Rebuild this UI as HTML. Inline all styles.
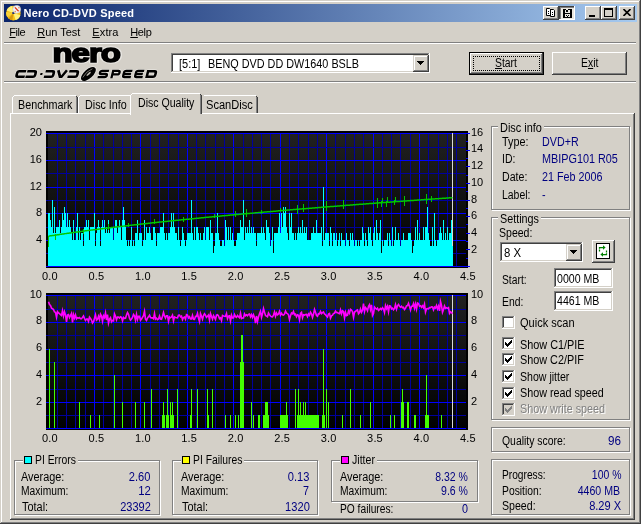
<!DOCTYPE html>
<html><head><meta charset="utf-8"><title>Nero CD-DVD Speed</title><style>
html,body{margin:0;padding:0;background:#d4d0c8;}
body{width:641px;height:524px;position:relative;overflow:hidden;font-family:"Liberation Sans",sans-serif;font-size:11px;line-height:13px;}
div,svg.abs,.abs{position:absolute;}
.t{position:absolute;white-space:pre;font-size:11px;line-height:13px;height:13px;}
.m{font-size:12.5px;line-height:15px;height:15px;}
u{text-decoration:underline;text-underline-offset:1px;}
.arrow{width:0;height:0;border-left:4px solid transparent;border-right:4px solid transparent;border-top:4px solid #000;}
</style></head><body><div id="win" style="left:0;top:0;width:641px;height:524px;will-change:transform;overflow:hidden">
<div class="abs" style="left:0;top:0;width:641px;height:524px;background:#d4d0c8"></div>
<div class="" style="left:0px;top:1px;width:640px;height:1px;background:#fff"></div>
<div class="" style="left:1px;top:1px;width:1px;height:522px;background:#fff"></div>
<div class="" style="left:639px;top:0px;width:1px;height:523px;background:#808080"></div>
<div class="" style="left:640px;top:0px;width:1px;height:524px;background:#404040"></div>
<div class="" style="left:0px;top:522px;width:640px;height:1px;background:#808080"></div>
<div class="" style="left:0px;top:523px;width:641px;height:1px;background:#404040"></div>
<div class="" style="left:0px;top:0px;width:640px;height:1px;background:#d4d0c8"></div>
<div class="" style="left:0px;top:0px;width:1px;height:523px;background:#d4d0c8"></div>
<div class="" style="left:4px;top:4px;width:633px;height:18px;background:linear-gradient(to right,#0a246a 0%,#a6caf0 100%)"></div>
<svg class="abs" style="left:6px;top:5px" width="16" height="16" viewBox="0 0 16 16">
<circle cx="7.4" cy="8.1" r="7.3" fill="#f5c118"/>
<path d="M7.4 8.1 L0.6 5.4 A7.3 7.3 0 0 1 6.2 0.9 Z" fill="#fff37c"/>
<path d="M7.4 8.1 L14.4 10.2 A7.3 7.3 0 0 1 9.6 15.1 Z" fill="#fff37c"/>
<path d="M7.4 8.1 L2.6 13.6 A7.3 7.3 0 0 0 6.4 15.3 Z" fill="#d8980e"/>
<path d="M7.4 8.1 L1.2 12 A7.3 7.3 0 0 1 0.2 7 Z" fill="#f9d23a"/>
<circle cx="7.4" cy="7.9" r="1.2" fill="#1a2a7a"/>
<circle cx="10.7" cy="4.3" r="3.9" fill="#f4f4f4"/>
<circle cx="10.7" cy="4.3" r="3.9" fill="none" stroke="#cfcfcf" stroke-width="0.7"/>
<path d="M8.9 2.4 L12.6 6.2" stroke="#e03818" stroke-width="1.3"/>
<circle cx="12.9" cy="2.7" r="0.7" fill="#e87850"/><circle cx="9.2" cy="6.5" r="0.7" fill="#e87850"/>
</svg>
<span id="t0" class="t" style="color:#fff;top:7px;left:23.5px;letter-spacing:0.225px;font-weight:bold;">Nero CD-DVD Speed</span>
<div class="" style="left:543px;top:6px;width:16px;height:14px;background:#d4d0c8;box-shadow:inset -1px -1px 0 #404040,inset 1px 1px 0 #ffffff,inset -2px -2px 0 #808080,inset 2px 2px 0 #d4d0c8;"><svg class="abs" style="left:3px;top:2px" width="10" height="10" viewBox="0 0 10 10"><path d="M0.5 0.5H3.5L4.5 1.5V7.5H0.5Z M4.5 1.5H7.5L8.5 2.5V8.5H4.5Z" fill="#fff" stroke="#000" stroke-width="1"/><rect x="2" y="3" width="1" height="1"/><rect x="2" y="5" width="1" height="1"/><rect x="6" y="4" width="1" height="1"/><rect x="6" y="6" width="1" height="1"/></svg></div>
<div class="" style="left:559px;top:6px;width:16px;height:14px;background:#ebe8e1;box-shadow:inset -1px -1px 0 #ffffff,inset 1px 1px 0 #404040,inset 2px 2px 0 #808080;"><svg class="abs" style="left:4px;top:3px" width="9" height="9" viewBox="0 0 9 9" shape-rendering="crispEdges"><rect x="0" y="0" width="9" height="9" fill="#000"/><rect x="2" y="1" width="5" height="3" fill="#ebe8e1"/><rect x="3" y="0" width="2" height="1" fill="#ebe8e1"/><rect x="3" y="1" width="2" height="2" fill="#000"/><rect x="2" y="5" width="5" height="3" fill="#ebe8e1"/><rect x="3" y="6" width="1" height="1" fill="#000"/><rect x="5" y="6" width="1" height="1" fill="#000"/><rect x="4" y="7" width="1" height="1" fill="#000"/></svg></div>
<div class="" style="left:585px;top:6px;width:16px;height:14px;background:#d4d0c8;box-shadow:inset -1px -1px 0 #404040,inset 1px 1px 0 #ffffff,inset -2px -2px 0 #808080,inset 2px 2px 0 #d4d0c8;"><div class="abs" style="left:4px;top:9px;width:6px;height:2px;background:#000"></div></div>
<div class="" style="left:601px;top:6px;width:16px;height:14px;background:#d4d0c8;box-shadow:inset -1px -1px 0 #404040,inset 1px 1px 0 #ffffff,inset -2px -2px 0 #808080,inset 2px 2px 0 #d4d0c8;"><div class="abs" style="left:3px;top:2px;width:9px;height:9px;box-sizing:border-box;border:1px solid #000;border-top:2px solid #000"></div></div>
<div class="" style="left:619px;top:6px;width:16px;height:14px;background:#d4d0c8;box-shadow:inset -1px -1px 0 #404040,inset 1px 1px 0 #ffffff,inset -2px -2px 0 #808080,inset 2px 2px 0 #d4d0c8;"><svg class="abs" style="left:4px;top:3px" width="8" height="7" viewBox="0 0 8 7"><path d="M0.5 0L7.5 7M7.5 0L0.5 7" stroke="#000" stroke-width="1.6"/></svg></div>
<span id="t1" class="t" style="color:#000;top:26px;left:9.3px;letter-spacing:-0.438px;"><u>F</u>ile</span>
<span id="t2" class="t" style="color:#000;top:26px;left:37.2px;"><u>R</u>un Test</span>
<span id="t3" class="t" style="color:#000;top:26px;left:92.3px;letter-spacing:0.123px;"><u>E</u>xtra</span>
<span id="t4" class="t" style="color:#000;top:26px;left:130.3px;letter-spacing:-0.385px;"><u>H</u>elp</span>
<div class="" style="left:4px;top:42px;width:632px;height:1px;background:#808080"></div>
<div class="" style="left:4px;top:43px;width:632px;height:1px;background:#fff"></div>
<div class="" style="left:4px;top:81px;width:632px;height:1px;background:#808080"></div>
<div class="" style="left:4px;top:82px;width:632px;height:1px;background:#fff"></div>
<svg class="abs" style="left:10px;top:44px" width="152" height="37" viewBox="10 44 152 37"><g font-family="Liberation Sans, sans-serif" font-weight="bold" font-size="25.4" transform="translate(52.5,62.1) scale(1.3,1)"><text x="0" y="0" stroke="#fff" stroke-width="3.6" stroke-linejoin="round" fill="#fff" opacity="0.5" letter-spacing="-0.8">nero</text><text x="0" y="0" stroke="#000" stroke-width="1.5" fill="#000" letter-spacing="-0.8">nero</text></g><g transform="translate(0,74) skewX(-14) translate(0,-74)"><path d="M25.4 71.25H18.599999999999998Q16.9 71.25 16.9 72.95V75.05Q16.9 76.75 18.599999999999998 76.75H25.4M26.6 71.25H33.699999999999996Q35.4 71.25 35.4 72.95V75.05Q35.4 76.75 33.699999999999996 76.75H26.200000000000003M45.0 71.25H51.8Q53.5 71.25 53.5 72.95V75.05Q53.5 76.75 51.8 76.75H44.6M57.4 70.25L60.7 76.75H62.300000000000004L66.0 70.25M68.6 71.25H75.8Q77.5 71.25 77.5 72.95V75.05Q77.5 76.75 75.8 76.75H68.19999999999999" fill="none" stroke="#fff" stroke-width="4.0" opacity="0.4" stroke-linejoin="round"/><path d="M108.2 70.95H101.3Q99.6 70.95 99.6 72.475Q99.6 74.0 101.3 74.0H105.5Q107.2 74.0 107.2 75.525Q107.2 77.05 105.5 77.05H98.39999999999999M112.4 78.14999999999999V70.95H117.5Q119.2 70.95 119.2 72.675Q119.2 74.4 117.5 74.4H112.4M131.6 70.95H125.3Q123.6 70.95 123.6 72.65V75.35Q123.6 77.05 125.3 77.05H131.6M123.6 74.0H131.0M143.4 70.95H137.29999999999998Q135.6 70.95 135.6 72.65V75.35Q135.6 77.05 137.29999999999998 77.05H143.4M135.6 74.0H142.8M147.4 71.25H153.8Q155.5 71.25 155.5 72.95V75.05Q155.5 76.75 153.8 76.75H147.4Z" fill="none" stroke="#fff" stroke-width="3.9" opacity="0.4" stroke-linejoin="round"/><path d="M25.4 71.25H18.599999999999998Q16.9 71.25 16.9 72.95V75.05Q16.9 76.75 18.599999999999998 76.75H25.4M26.6 71.25H33.699999999999996Q35.4 71.25 35.4 72.95V75.05Q35.4 76.75 33.699999999999996 76.75H26.200000000000003M45.0 71.25H51.8Q53.5 71.25 53.5 72.95V75.05Q53.5 76.75 51.8 76.75H44.6M57.4 70.25L60.7 76.75H62.300000000000004L66.0 70.25M68.6 71.25H75.8Q77.5 71.25 77.5 72.95V75.05Q77.5 76.75 75.8 76.75H68.19999999999999" fill="none" stroke="#000" stroke-width="2.65" stroke-linejoin="miter"/><path d="M108.2 70.95H101.3Q99.6 70.95 99.6 72.475Q99.6 74.0 101.3 74.0H105.5Q107.2 74.0 107.2 75.525Q107.2 77.05 105.5 77.05H98.39999999999999M112.4 78.14999999999999V70.95H117.5Q119.2 70.95 119.2 72.675Q119.2 74.4 117.5 74.4H112.4M131.6 70.95H125.3Q123.6 70.95 123.6 72.65V75.35Q123.6 77.05 125.3 77.05H131.6M123.6 74.0H131.0M143.4 70.95H137.29999999999998Q135.6 70.95 135.6 72.65V75.35Q135.6 77.05 137.29999999999998 77.05H143.4M135.6 74.0H142.8" fill="none" stroke="#000" stroke-width="2.3" stroke-linejoin="miter"/><path d="M147.4 71.25H153.8Q155.5 71.25 155.5 72.95V75.05Q155.5 76.75 153.8 76.75H147.4Z" fill="none" stroke="#000" stroke-width="2.6" stroke-linejoin="miter"/><rect x="40.3" y="72.9" width="2.1" height="2.1" fill="#000"/></g><g transform="translate(88.4,74) rotate(-42)"><ellipse cx="0" cy="0" rx="10" ry="5.3" fill="#fff" opacity="0.45"/><ellipse cx="0" cy="0" rx="9.1" ry="4.5" fill="#000"/><ellipse cx="0.3" cy="0.1" rx="2.8" ry="0.9" fill="#b8b4ac"/><path d="M-6.5 -1.2Q0 -3.6 6.5 -1.2" stroke="#9a968e" stroke-width="0.7" fill="none"/></g></svg>
<div class="" style="left:171px;top:53px;width:259px;height:20px;background:#fff;box-shadow:inset -1px -1px 0 #ffffff,inset 1px 1px 0 #808080,inset -2px -2px 0 #d4d0c8,inset 2px 2px 0 #404040;"></div>
<div class="" style="left:413px;top:55px;width:16px;height:17px;background:#d4d0c8;box-shadow:inset -1px -1px 0 #404040,inset 1px 1px 0 #d4d0c8,inset -2px -2px 0 #808080,inset 2px 2px 0 #ffffff;"><svg class="abs" style="left:4px;top:6px" width="7" height="4" viewBox="0 0 7 4" shape-rendering="crispEdges"><path d="M0 0h7v1h-1v1h-1v1h-1v1h-1v-1h-1v-1h-1v-1h-1z" fill="#000"/></svg></div>
<span id="t5" class="t m" style="color:#000;top:57px;left:178.8px;transform-origin:0 0;transform:scaleX(0.8796);">[5:1]</span>
<span id="t6" class="t m" style="color:#000;top:57px;left:208.3px;transform-origin:0 0;transform:scaleX(0.8666);">BENQ DVD DD DW1640 BSLB</span>
<div class="" style="left:469px;top:52px;width:75px;height:23px;background:#000"></div>
<div class="" style="left:470px;top:53px;width:73px;height:21px;background:#d4d0c8;box-shadow:inset -1px -1px 0 #404040,inset 1px 1px 0 #ffffff,inset -2px -2px 0 #808080,inset 2px 2px 0 #d4d0c8;"></div>
<div class="" style="left:473px;top:56px;width:67px;height:15px;border:1px dotted #000;box-sizing:border-box"></div>
<span id="t7" class="t m" style="color:#000;top:56px;left:495.3px;transform-origin:0 0;transform:scaleX(0.8293);"><u>S</u>tart</span>
<div class="" style="left:552px;top:52px;width:75px;height:23px;background:#d4d0c8;box-shadow:inset -1px -1px 0 #404040,inset 1px 1px 0 #ffffff,inset -2px -2px 0 #808080,inset 2px 2px 0 #d4d0c8;"></div>
<span id="t8" class="t m" style="color:#000;top:56px;left:581.3px;transform-origin:0 0;transform:scaleX(0.8348);">E<u>x</u>it</span>
<div class="" style="left:10px;top:113px;width:625px;height:407px;background:#d4d0c8;box-shadow:inset -1px -1px 0 #404040,inset 1px 1px 0 #ffffff,inset -2px -2px 0 #808080;"></div>
<div class="" style="left:12px;top:95px;width:66px;height:18px;background:#d4d0c8"></div>
<div class="" style="left:12px;top:97px;width:1px;height:16px;background:#fff"></div>
<div class="" style="left:13px;top:96px;width:1px;height:1px;background:#fff"></div>
<div class="" style="left:14px;top:95px;width:62px;height:1px;background:#fff"></div>
<div class="" style="left:77px;top:97px;width:1px;height:16px;background:#404040"></div>
<div class="" style="left:76px;top:96px;width:1px;height:1px;background:#404040"></div>
<div class="" style="left:76px;top:97px;width:1px;height:16px;background:#808080"></div>
<span id="t9" class="t m" style="color:#000;top:98px;left:18.3px;transform-origin:0 0;transform:scaleX(0.8603);">Benchmark</span>
<div class="" style="left:78px;top:95px;width:54px;height:18px;background:#d4d0c8"></div>
<div class="" style="left:78px;top:97px;width:1px;height:16px;background:#fff"></div>
<div class="" style="left:79px;top:96px;width:1px;height:1px;background:#fff"></div>
<div class="" style="left:80px;top:95px;width:50px;height:1px;background:#fff"></div>
<div class="" style="left:131px;top:97px;width:1px;height:16px;background:#404040"></div>
<div class="" style="left:130px;top:96px;width:1px;height:1px;background:#404040"></div>
<div class="" style="left:130px;top:97px;width:1px;height:16px;background:#808080"></div>
<span id="t10" class="t m" style="color:#000;top:98px;left:84.6px;transform-origin:0 0;transform:scaleX(0.8594);">Disc Info</span>
<div class="" style="left:202px;top:95px;width:56px;height:18px;background:#d4d0c8"></div>
<div class="" style="left:204px;top:95px;width:52px;height:1px;background:#fff"></div>
<div class="" style="left:257px;top:97px;width:1px;height:16px;background:#404040"></div>
<div class="" style="left:256px;top:96px;width:1px;height:1px;background:#404040"></div>
<div class="" style="left:256px;top:97px;width:1px;height:16px;background:#808080"></div>
<span id="t11" class="t m" style="color:#000;top:98px;left:205.6px;transform-origin:0 0;transform:scaleX(0.8864);">ScanDisc</span>
<div class="" style="left:130px;top:93px;width:72px;height:22px;background:#d4d0c8"></div>
<div class="" style="left:130px;top:95px;width:1px;height:20px;background:#fff"></div>
<div class="" style="left:131px;top:94px;width:1px;height:1px;background:#fff"></div>
<div class="" style="left:132px;top:93px;width:68px;height:1px;background:#fff"></div>
<div class="" style="left:201px;top:95px;width:1px;height:19px;background:#404040"></div>
<div class="" style="left:200px;top:94px;width:1px;height:1px;background:#404040"></div>
<div class="" style="left:200px;top:95px;width:1px;height:19px;background:#808080"></div>
<span id="t12" class="t m" style="color:#000;top:96px;left:138.3px;transform-origin:0 0;transform:scaleX(0.8457);">Disc Quality</span>
<div class="" style="left:492px;top:127px;width:139px;height:84px;border:1px solid #fff;box-sizing:border-box"></div>
<div class="" style="left:491px;top:126px;width:139px;height:84px;border:1px solid #808080;box-sizing:border-box"></div>
<div class="" style="left:497.5px;top:124px;width:46.0px;height:5px;background:#d4d0c8"></div>
<span id="t13" class="t m" style="color:#000;top:121px;left:499.8px;transform-origin:0 0;transform:scaleX(0.8741);">Disc info</span>
<span id="t14" class="t m" style="color:#000;top:135px;left:502.3px;transform-origin:0 0;transform:scaleX(0.8634);">Type:</span>
<span id="t15" class="t m" style="color:#000080;top:135px;left:542.0px;transform-origin:0 0;transform:scaleX(0.8579);">DVD+R</span>
<span id="t16" class="t m" style="color:#000;top:152px;left:502.3px;transform-origin:0 0;transform:scaleX(0.8383);">ID:</span>
<span id="t17" class="t m" style="color:#000080;top:152px;left:542.0px;transform-origin:0 0;transform:scaleX(0.8670);">MBIPG101 R05</span>
<span id="t18" class="t m" style="color:#000;top:170px;left:502.3px;transform-origin:0 0;transform:scaleX(0.8498);">Date:</span>
<span id="t19" class="t m" style="color:#000080;top:170px;left:542.0px;transform-origin:0 0;transform:scaleX(0.8604);">21 Feb 2006</span>
<span id="t20" class="t m" style="color:#000;top:188px;left:502.3px;transform-origin:0 0;transform:scaleX(0.8338);">Label:</span>
<span id="t21" class="t m" style="color:#000080;top:188px;left:542.0px;transform-origin:0 0;transform:scaleX(0.8600);">-</span>
<div class="" style="left:492px;top:218px;width:139px;height:203px;border:1px solid #fff;box-sizing:border-box"></div>
<div class="" style="left:491px;top:217px;width:139px;height:203px;border:1px solid #808080;box-sizing:border-box"></div>
<div class="" style="left:497.5px;top:215px;width:43.0px;height:5px;background:#d4d0c8"></div>
<span id="t22" class="t m" style="color:#000;top:212px;left:499.8px;transform-origin:0 0;transform:scaleX(0.8612);">Settings</span>
<span id="t23" class="t m" style="color:#000;top:226px;left:499.0px;transform-origin:0 0;transform:scaleX(0.8429);">Speed:</span>
<div class="" style="left:500px;top:242px;width:83px;height:20px;background:#fff;box-shadow:inset -1px -1px 0 #ffffff,inset 1px 1px 0 #808080,inset -2px -2px 0 #d4d0c8,inset 2px 2px 0 #404040;"></div>
<div class="" style="left:566px;top:244px;width:16px;height:17px;background:#d4d0c8;box-shadow:inset -1px -1px 0 #404040,inset 1px 1px 0 #d4d0c8,inset -2px -2px 0 #808080,inset 2px 2px 0 #ffffff;"><svg class="abs" style="left:4px;top:6px" width="7" height="4" viewBox="0 0 7 4" shape-rendering="crispEdges"><path d="M0 0h7v1h-1v1h-1v1h-1v1h-1v-1h-1v-1h-1v-1h-1z" fill="#000"/></svg></div>
<span id="t24" class="t m" style="color:#000;top:246px;left:503.5px;transform-origin:0 0;transform:scaleX(0.9112);">8 X</span>
<div class="" style="left:592px;top:240px;width:23px;height:23px;background:#d4d0c8;box-shadow:inset -1px -1px 0 #404040,inset 1px 1px 0 #ffffff,inset -2px -2px 0 #808080,inset 2px 2px 0 #d4d0c8;"><svg class="abs" style="left:4px;top:3px" width="14" height="16" viewBox="0 0 14 16"><rect x="0.5" y="0.5" width="13" height="15" fill="#fff" stroke="#000"/>
<path d="M3.5 8.4V6.6M3.5 5.8V4.5H7.5" stroke="#008000" stroke-width="1.25" fill="none"/><path d="M7 2.2L9.6 4.5L7 6.8Z" fill="#008000"/>
<path d="M10.5 7.6V9.4M10.5 10.2V11.5H6.5" stroke="#008000" stroke-width="1.25" fill="none"/><path d="M7 9.2L4.4 11.5L7 13.8Z" fill="#008000"/></svg></div>
<span id="t25" class="t m" style="color:#000;top:273px;left:502.3px;transform-origin:0 0;transform:scaleX(0.8234);">Start:</span>
<div class="" style="left:554px;top:268px;width:59px;height:20px;background:#fff;box-shadow:inset -1px -1px 0 #ffffff,inset 1px 1px 0 #808080,inset -2px -2px 0 #d4d0c8,inset 2px 2px 0 #404040;"></div>
<span id="t26" class="t m" style="color:#000;top:272px;left:556.9px;transform-origin:0 0;transform:scaleX(0.8475);">0000 MB</span>
<span id="t27" class="t m" style="color:#000;top:295px;left:502.3px;transform-origin:0 0;transform:scaleX(0.8282);">End:</span>
<div class="" style="left:554px;top:291px;width:59px;height:20px;background:#fff;box-shadow:inset -1px -1px 0 #ffffff,inset 1px 1px 0 #808080,inset -2px -2px 0 #d4d0c8,inset 2px 2px 0 #404040;"></div>
<span id="t28" class="t m" style="color:#000;top:294px;left:556.9px;transform-origin:0 0;transform:scaleX(0.8475);">4461 MB</span>
<div class="" style="left:502px;top:316px;width:13px;height:13px;background:#fff;box-shadow:inset -1px -1px 0 #ffffff,inset 1px 1px 0 #808080,inset -2px -2px 0 #d4d0c8,inset 2px 2px 0 #404040;"></div>
<span id="t29" class="t m" style="color:#000;top:316px;left:519.7px;transform-origin:0 0;transform:scaleX(0.8829);">Quick scan</span>
<div class="" style="left:502px;top:337px;width:13px;height:13px;background:#fff;box-shadow:inset -1px -1px 0 #ffffff,inset 1px 1px 0 #808080,inset -2px -2px 0 #d4d0c8,inset 2px 2px 0 #404040;"><svg class="abs" style="left:3px;top:3px" width="7" height="7" viewBox="0 0 7 7" shape-rendering="crispEdges"><path d="M0 2h1v1h1v1h1v-1h1v-1h1v-1h1v-1h1v3h-1v1h-1v1h-1v1h-1v1h-1v-1h-1v-1h-1z" fill="#000"/></svg></div>
<span id="t30" class="t m" style="color:#000;top:338px;left:519.7px;transform-origin:0 0;transform:scaleX(0.8689);">Show C1/PIE</span>
<div class="" style="left:502px;top:353px;width:13px;height:13px;background:#fff;box-shadow:inset -1px -1px 0 #ffffff,inset 1px 1px 0 #808080,inset -2px -2px 0 #d4d0c8,inset 2px 2px 0 #404040;"><svg class="abs" style="left:3px;top:3px" width="7" height="7" viewBox="0 0 7 7" shape-rendering="crispEdges"><path d="M0 2h1v1h1v1h1v-1h1v-1h1v-1h1v-1h1v3h-1v1h-1v1h-1v1h-1v1h-1v-1h-1v-1h-1z" fill="#000"/></svg></div>
<span id="t31" class="t m" style="color:#000;top:353px;left:519.7px;transform-origin:0 0;transform:scaleX(0.8664);">Show C2/PIF</span>
<div class="" style="left:502px;top:370px;width:13px;height:13px;background:#fff;box-shadow:inset -1px -1px 0 #ffffff,inset 1px 1px 0 #808080,inset -2px -2px 0 #d4d0c8,inset 2px 2px 0 #404040;"><svg class="abs" style="left:3px;top:3px" width="7" height="7" viewBox="0 0 7 7" shape-rendering="crispEdges"><path d="M0 2h1v1h1v1h1v-1h1v-1h1v-1h1v-1h1v3h-1v1h-1v1h-1v1h-1v1h-1v-1h-1v-1h-1z" fill="#000"/></svg></div>
<span id="t32" class="t m" style="color:#000;top:370px;left:519.7px;transform-origin:0 0;transform:scaleX(0.8465);">Show jitter</span>
<div class="" style="left:502px;top:387px;width:13px;height:13px;background:#fff;box-shadow:inset -1px -1px 0 #ffffff,inset 1px 1px 0 #808080,inset -2px -2px 0 #d4d0c8,inset 2px 2px 0 #404040;"><svg class="abs" style="left:3px;top:3px" width="7" height="7" viewBox="0 0 7 7" shape-rendering="crispEdges"><path d="M0 2h1v1h1v1h1v-1h1v-1h1v-1h1v-1h1v3h-1v1h-1v1h-1v1h-1v1h-1v-1h-1v-1h-1z" fill="#000"/></svg></div>
<span id="t33" class="t m" style="color:#000;top:386px;left:519.7px;transform-origin:0 0;transform:scaleX(0.8613);">Show read speed</span>
<div class="" style="left:502px;top:403px;width:13px;height:13px;background:#d4d0c8;box-shadow:inset -1px -1px 0 #ffffff,inset 1px 1px 0 #808080,inset -2px -2px 0 #d4d0c8,inset 2px 2px 0 #404040;"><svg class="abs" style="left:3px;top:3px" width="7" height="7" viewBox="0 0 7 7" shape-rendering="crispEdges"><path d="M0 2h1v1h1v1h1v-1h1v-1h1v-1h1v-1h1v3h-1v1h-1v1h-1v1h-1v1h-1v-1h-1v-1h-1z" fill="#808080"/></svg></div>
<span id="t34" class="t m" style="color:#fff;top:403px;left:520.7px;transform-origin:0 0;transform:scaleX(0.8625);">Show write speed</span>
<span id="t35" class="t m" style="color:#808080;top:402px;left:519.7px;transform-origin:0 0;transform:scaleX(0.8625);">Show write speed</span>
<div class="" style="left:492px;top:428px;width:139px;height:25px;border:1px solid #fff;box-sizing:border-box"></div>
<div class="" style="left:491px;top:427px;width:139px;height:25px;border:1px solid #808080;box-sizing:border-box"></div>
<span id="t36" class="t m" style="color:#000;top:434px;left:502.0px;transform-origin:0 0;transform:scaleX(0.8322);">Quality score:</span>
<span id="t37" class="t m" style="color:#000080;top:434px;right:20.600000000000023px;transform-origin:100% 0;transform:scaleX(0.9348);">96</span>
<div class="" style="left:492px;top:460px;width:139px;height:56px;border:1px solid #fff;box-sizing:border-box"></div>
<div class="" style="left:491px;top:459px;width:139px;height:56px;border:1px solid #808080;box-sizing:border-box"></div>
<span id="t38" class="t m" style="color:#000;top:468px;left:502.0px;transform-origin:0 0;transform:scaleX(0.8150);">Progress:</span>
<span id="t39" class="t m" style="color:#000080;top:468px;right:19.700000000000045px;transform-origin:100% 0;transform:scaleX(0.8349);">100 %</span>
<span id="t40" class="t m" style="color:#000;top:484px;left:502.0px;transform-origin:0 0;transform:scaleX(0.8258);">Position:</span>
<span id="t41" class="t m" style="color:#000080;top:484px;right:20.600000000000023px;transform-origin:100% 0;transform:scaleX(0.8475);">4460 MB</span>
<span id="t42" class="t m" style="color:#000;top:499px;left:502.0px;transform-origin:0 0;transform:scaleX(0.8479);">Speed:</span>
<span id="t43" class="t m" style="color:#000080;top:499px;right:19.600000000000023px;transform-origin:100% 0;transform:scaleX(0.8854);">8.29 X</span>
<div class="" style="left:15px;top:461px;width:146px;height:55px;border:1px solid #fff;box-sizing:border-box"></div>
<div class="" style="left:14px;top:460px;width:146px;height:55px;border:1px solid #808080;box-sizing:border-box"></div>
<div class="" style="left:23px;top:458px;width:54.5px;height:5px;background:#d4d0c8"></div>
<div class="" style="left:24px;top:456px;width:8px;height:8px;background:#00ffff;border:1px solid #000;box-sizing:border-box"></div>
<span id="t44" class="t m" style="color:#000;top:453px;left:34.8px;transform-origin:0 0;transform:scaleX(0.8294);">PI Errors</span>
<span id="t45" class="t m" style="color:#000;top:470px;left:21.3px;transform-origin:0 0;transform:scaleX(0.8713);">Average:</span>
<span id="t46" class="t m" style="color:#000080;top:470px;right:490.4px;transform-origin:100% 0;transform:scaleX(0.8873);">2.60</span>
<span id="t47" class="t m" style="color:#000;top:484px;left:21.3px;transform-origin:0 0;transform:scaleX(0.8204);">Maximum:</span>
<span id="t48" class="t m" style="color:#000080;top:484px;right:490.4px;transform-origin:100% 0;transform:scaleX(0.9061);">12</span>
<span id="t49" class="t m" style="color:#000;top:500px;left:22.3px;transform-origin:0 0;transform:scaleX(0.8732);">Total:</span>
<span id="t50" class="t m" style="color:#000080;top:500px;right:490.4px;transform-origin:100% 0;transform:scaleX(0.8802);">23392</span>
<div class="" style="left:173px;top:461px;width:146px;height:55px;border:1px solid #fff;box-sizing:border-box"></div>
<div class="" style="left:172px;top:460px;width:146px;height:55px;border:1px solid #808080;box-sizing:border-box"></div>
<div class="" style="left:181px;top:458px;width:63px;height:5px;background:#d4d0c8"></div>
<div class="" style="left:182px;top:456px;width:8px;height:8px;background:#ffff00;border:1px solid #000;box-sizing:border-box"></div>
<span id="t51" class="t m" style="color:#000;top:453px;left:192.8px;transform-origin:0 0;transform:scaleX(0.8268);">PI Failures</span>
<span id="t52" class="t m" style="color:#000;top:470px;left:180.5px;transform-origin:0 0;transform:scaleX(0.8713);">Average:</span>
<span id="t53" class="t m" style="color:#000080;top:470px;right:331.7px;transform-origin:100% 0;transform:scaleX(0.8873);">0.13</span>
<span id="t54" class="t m" style="color:#000;top:484px;left:180.5px;transform-origin:0 0;transform:scaleX(0.8204);">Maximum:</span>
<span id="t55" class="t m" style="color:#000080;top:484px;right:331.7px;transform-origin:100% 0;transform:scaleX(0.8600);">7</span>
<span id="t56" class="t m" style="color:#000;top:500px;left:181.5px;transform-origin:0 0;transform:scaleX(0.8732);">Total:</span>
<span id="t57" class="t m" style="color:#000080;top:500px;right:331.7px;transform-origin:100% 0;transform:scaleX(0.8881);">1320</span>
<div class="" style="left:332px;top:461px;width:147px;height:42px;border:1px solid #fff;box-sizing:border-box"></div>
<div class="" style="left:331px;top:460px;width:147px;height:42px;border:1px solid #808080;box-sizing:border-box"></div>
<div class="" style="left:340px;top:458px;width:36.5px;height:5px;background:#d4d0c8"></div>
<div class="" style="left:341px;top:456px;width:8px;height:8px;background:#ff00ff;border:1px solid #000;box-sizing:border-box"></div>
<span id="t58" class="t m" style="color:#000;top:453px;left:351.8px;transform-origin:0 0;transform:scaleX(0.8452);">Jitter</span>
<span id="t59" class="t m" style="color:#000;top:470px;left:339.7px;transform-origin:0 0;transform:scaleX(0.8713);">Average:</span>
<span id="t60" class="t m" style="color:#000080;top:470px;right:173px;transform-origin:100% 0;transform:scaleX(0.8401);">8.32 %</span>
<span id="t61" class="t m" style="color:#000;top:484px;left:339.7px;transform-origin:0 0;transform:scaleX(0.8204);">Maximum:</span>
<span id="t62" class="t m" style="color:#000080;top:484px;right:173px;transform-origin:100% 0;transform:scaleX(0.8414);">9.6 %</span>
<span id="t63" class="t m" style="color:#000;top:502px;left:339.7px;transform-origin:0 0;transform:scaleX(0.8176);">PO failures:</span>
<span id="t64" class="t m" style="color:#000080;top:502px;right:173px;transform-origin:100% 0;transform:scaleX(0.8600);">0</span>
<svg class="abs" style="left:0;top:0" width="641" height="524" viewBox="0 0 641 524"><defs><linearGradient id="bg" x1="0" y1="0" x2="0" y2="1"><stop offset="0" stop-color="#212121"/><stop offset="1" stop-color="#000"/></linearGradient></defs><rect x="46" y="131" width="422" height="137" fill="#000"/><rect x="48" y="133" width="418" height="134" fill="url(#bg)"/><rect x="57" y="133" width="1" height="134" fill="#00009c"/><rect x="66" y="133" width="1" height="134" fill="#00009c"/><rect x="75" y="133" width="1" height="134" fill="#00009c"/><rect x="85" y="133" width="1" height="134" fill="#00009c"/><rect x="94" y="133" width="1" height="134" fill="#0000ff"/><rect x="103" y="133" width="1" height="134" fill="#00009c"/><rect x="113" y="133" width="1" height="134" fill="#00009c"/><rect x="122" y="133" width="1" height="134" fill="#00009c"/><rect x="131" y="133" width="1" height="134" fill="#00009c"/><rect x="140" y="133" width="1" height="134" fill="#0000ff"/><rect x="150" y="133" width="1" height="134" fill="#00009c"/><rect x="159" y="133" width="1" height="134" fill="#00009c"/><rect x="168" y="133" width="1" height="134" fill="#00009c"/><rect x="178" y="133" width="1" height="134" fill="#00009c"/><rect x="187" y="133" width="1" height="134" fill="#0000ff"/><rect x="196" y="133" width="1" height="134" fill="#00009c"/><rect x="205" y="133" width="1" height="134" fill="#00009c"/><rect x="215" y="133" width="1" height="134" fill="#00009c"/><rect x="224" y="133" width="1" height="134" fill="#00009c"/><rect x="233" y="133" width="1" height="134" fill="#0000ff"/><rect x="243" y="133" width="1" height="134" fill="#00009c"/><rect x="252" y="133" width="1" height="134" fill="#00009c"/><rect x="261" y="133" width="1" height="134" fill="#00009c"/><rect x="270" y="133" width="1" height="134" fill="#00009c"/><rect x="280" y="133" width="1" height="134" fill="#0000ff"/><rect x="289" y="133" width="1" height="134" fill="#00009c"/><rect x="298" y="133" width="1" height="134" fill="#00009c"/><rect x="308" y="133" width="1" height="134" fill="#00009c"/><rect x="317" y="133" width="1" height="134" fill="#00009c"/><rect x="326" y="133" width="1" height="134" fill="#0000ff"/><rect x="335" y="133" width="1" height="134" fill="#00009c"/><rect x="345" y="133" width="1" height="134" fill="#00009c"/><rect x="354" y="133" width="1" height="134" fill="#00009c"/><rect x="363" y="133" width="1" height="134" fill="#00009c"/><rect x="373" y="133" width="1" height="134" fill="#0000ff"/><rect x="382" y="133" width="1" height="134" fill="#00009c"/><rect x="391" y="133" width="1" height="134" fill="#00009c"/><rect x="400" y="133" width="1" height="134" fill="#00009c"/><rect x="410" y="133" width="1" height="134" fill="#00009c"/><rect x="419" y="133" width="1" height="134" fill="#0000ff"/><rect x="428" y="133" width="1" height="134" fill="#00009c"/><rect x="438" y="133" width="1" height="134" fill="#00009c"/><rect x="447" y="133" width="1" height="134" fill="#00009c"/><rect x="456" y="133" width="1" height="134" fill="#00009c"/><rect x="46" y="133" width="420" height="1" fill="#0000ff"/><rect x="46" y="147" width="420" height="1" fill="#00009c"/><rect x="46" y="160" width="420" height="1" fill="#0000ff"/><rect x="46" y="173" width="420" height="1" fill="#00009c"/><rect x="46" y="187" width="420" height="1" fill="#0000ff"/><rect x="46" y="200" width="420" height="1" fill="#00009c"/><rect x="46" y="213" width="420" height="1" fill="#0000ff"/><rect x="46" y="227" width="420" height="1" fill="#00009c"/><rect x="46" y="240" width="420" height="1" fill="#0000ff"/><rect x="46" y="253" width="420" height="1" fill="#00009c"/><rect x="46" y="266" width="420" height="1" fill="#0000ff"/><rect x="466" y="266" width="4" height="1" fill="#0000ff"/><rect x="466" y="258" width="2" height="1" fill="#0000ff"/><rect x="466" y="249" width="4" height="1" fill="#0000ff"/><rect x="466" y="241" width="2" height="1" fill="#0000ff"/><rect x="466" y="233" width="4" height="1" fill="#0000ff"/><rect x="466" y="224" width="2" height="1" fill="#0000ff"/><rect x="466" y="216" width="4" height="1" fill="#0000ff"/><rect x="466" y="208" width="2" height="1" fill="#0000ff"/><rect x="466" y="200" width="4" height="1" fill="#0000ff"/><rect x="466" y="191" width="2" height="1" fill="#0000ff"/><rect x="466" y="183" width="4" height="1" fill="#0000ff"/><rect x="466" y="175" width="2" height="1" fill="#0000ff"/><rect x="466" y="166" width="4" height="1" fill="#0000ff"/><rect x="466" y="158" width="2" height="1" fill="#0000ff"/><rect x="466" y="150" width="4" height="1" fill="#0000ff"/><rect x="466" y="141" width="2" height="1" fill="#0000ff"/><rect x="466" y="133" width="4" height="1" fill="#0000ff"/><rect x="452" y="133" width="1" height="133" fill="#d8d8d8"/><path d="M48 266V213h1V213h1V220h1V227h1V200h1V233h1V207h1V233h1V227h1V227h1V227h1V220h1V233h1V227h1V213h1V220h1V207h1V213h1V227h1V213h1V227h1V220h1V227h1V233h1V240h1V220h1V240h1V240h1V227h1V213h1V240h1V227h1V240h1V233h1V233h1V246h1V227h1V227h1V220h1V227h1V220h1V240h1V227h1V227h1V227h1V227h1V213h1V246h1V233h1V227h1V220h1V227h1V246h1V227h1V220h1V227h1V220h1V233h1V227h1V233h1V220h1V233h1V227h1V227h1V227h1V240h1V227h1V220h1V220h1V233h1V227h1V220h1V227h1V240h1V220h1V207h1V220h1V227h1V240h1V246h1V240h1V246h1V240h1V227h1V246h1V240h1V246h1V233h1V233h1V220h1V240h1V233h1V233h1V233h1V246h1V240h1V220h1V240h1V227h1V233h1V233h1V227h1V233h1V240h1V240h1V227h1V227h1V233h1V246h1V233h1V233h1V233h1V227h1V227h1V227h1V213h1V233h1V240h1V233h1V240h1V233h1V233h1V227h1V213h1V227h1V213h1V227h1V233h1V233h1V240h1V227h1V240h1V246h1V240h1V227h1V233h1V240h1V246h1V240h1V233h1V233h1V233h1V233h1V200h1V233h1V240h1V227h1V240h1V227h1V227h1V233h1V240h1V233h1V240h1V240h1V233h1V227h1V240h1V227h1V227h1V227h1V240h1V220h1V233h1V233h1V253h1V246h1V233h1V233h1V213h1V233h1V240h1V246h1V246h1V240h1V240h1V246h1V220h1V227h1V240h1V227h1V240h1V227h1V240h1V233h1V240h1V246h1V246h1V240h1V233h1V233h1V233h1V220h1V227h1V227h1V200h1V240h1V227h1V233h1V227h1V233h1V220h1V233h1V227h1V233h1V227h1V233h1V233h1V246h1V233h1V233h1V233h1V233h1V227h1V233h1V227h1V233h1V240h1V220h1V227h1V227h1V233h1V246h1V240h1V227h1V253h1V233h1V233h1V233h1V233h1V227h1V213h1V233h1V213h1V227h1V207h1V213h1V207h1V227h1V233h1V240h1V213h1V227h1V213h1V233h1V233h1V240h1V233h1V240h1V233h1V227h1V233h1V227h1V233h1V220h1V233h1V227h1V233h1V227h1V240h1V240h1V240h1V240h1V233h1V233h1V227h1V233h1V233h1V220h1V233h1V233h1V233h1V233h1V227h1V246h1V187h1V240h1V233h1V233h1V233h1V233h1V246h1V227h1V233h1V246h1V233h1V233h1V240h1V233h1V246h1V240h1V233h1V246h1V233h1V240h1V240h1V240h1V246h1V233h1V240h1V240h1V246h1V233h1V240h1V233h1V240h1V246h1V240h1V240h1V246h1V240h1V246h1V240h1V240h1V227h1V233h1V246h1V233h1V240h1V246h1V227h1V233h1V227h1V240h1V246h1V233h1V227h1V240h1V220h1V233h1V240h1V233h1V220h1V253h1V240h1V246h1V240h1V240h1V240h1V233h1V246h1V233h1V240h1V246h1V227h1V246h1V240h1V227h1V240h1V240h1V233h1V240h1V246h1V240h1V240h1V233h1V240h1V240h1V240h1V240h1V233h1V233h1V233h1V240h1V253h1V246h1V240h1V227h1V240h1V220h1V240h1V233h1V240h1V240h1V240h1V227h1V240h1V227h1V227h1V207h1V233h1V240h1V246h1V246h1V227h1V246h1V213h1V240h1V246h1V240h1V240h1V233h1V227h1V233h1V240h1V220h1V240h1V233h1V240h1V227h1V240h1V233h1V233h1V220h1V246h1V266Z" fill="#00ffff" shape-rendering="crispEdges"/><rect x="48" y="266" width="1" height="1" fill="#0000ff"/><rect x="57" y="266" width="1" height="1" fill="#0000ff"/><rect x="66" y="266" width="1" height="1" fill="#0000ff"/><rect x="75" y="266" width="1" height="1" fill="#0000ff"/><rect x="85" y="266" width="1" height="1" fill="#0000ff"/><rect x="94" y="266" width="1" height="1" fill="#0000ff"/><rect x="103" y="266" width="1" height="1" fill="#0000ff"/><rect x="113" y="266" width="1" height="1" fill="#0000ff"/><rect x="122" y="266" width="1" height="1" fill="#0000ff"/><rect x="131" y="266" width="1" height="1" fill="#0000ff"/><rect x="140" y="266" width="1" height="1" fill="#0000ff"/><rect x="150" y="266" width="1" height="1" fill="#0000ff"/><rect x="159" y="266" width="1" height="1" fill="#0000ff"/><rect x="168" y="266" width="1" height="1" fill="#0000ff"/><rect x="178" y="266" width="1" height="1" fill="#0000ff"/><rect x="187" y="266" width="1" height="1" fill="#0000ff"/><rect x="196" y="266" width="1" height="1" fill="#0000ff"/><rect x="205" y="266" width="1" height="1" fill="#0000ff"/><rect x="215" y="266" width="1" height="1" fill="#0000ff"/><rect x="224" y="266" width="1" height="1" fill="#0000ff"/><rect x="233" y="266" width="1" height="1" fill="#0000ff"/><rect x="243" y="266" width="1" height="1" fill="#0000ff"/><rect x="252" y="266" width="1" height="1" fill="#0000ff"/><rect x="261" y="266" width="1" height="1" fill="#0000ff"/><rect x="270" y="266" width="1" height="1" fill="#0000ff"/><rect x="280" y="266" width="1" height="1" fill="#0000ff"/><rect x="289" y="266" width="1" height="1" fill="#0000ff"/><rect x="298" y="266" width="1" height="1" fill="#0000ff"/><rect x="308" y="266" width="1" height="1" fill="#0000ff"/><rect x="317" y="266" width="1" height="1" fill="#0000ff"/><rect x="326" y="266" width="1" height="1" fill="#0000ff"/><rect x="335" y="266" width="1" height="1" fill="#0000ff"/><rect x="345" y="266" width="1" height="1" fill="#0000ff"/><rect x="354" y="266" width="1" height="1" fill="#0000ff"/><rect x="363" y="266" width="1" height="1" fill="#0000ff"/><rect x="373" y="266" width="1" height="1" fill="#0000ff"/><rect x="382" y="266" width="1" height="1" fill="#0000ff"/><rect x="391" y="266" width="1" height="1" fill="#0000ff"/><rect x="400" y="266" width="1" height="1" fill="#0000ff"/><rect x="410" y="266" width="1" height="1" fill="#0000ff"/><rect x="419" y="266" width="1" height="1" fill="#0000ff"/><rect x="428" y="266" width="1" height="1" fill="#0000ff"/><rect x="438" y="266" width="1" height="1" fill="#0000ff"/><rect x="447" y="266" width="1" height="1" fill="#0000ff"/><path d="M48.5 236.16 L49.5 236.00 L50.5 235.85 L51.5 235.70 L52.5 235.54 L53.5 235.39 L54.5 235.24 L55.5 235.09 L56.5 234.94 L57.5 234.79 L58.5 234.64 L59.5 234.49 L60.5 234.34 L61.5 234.20 L62.5 234.05 L63.5 233.91 L64.5 233.76 L65.5 233.62 L66.5 233.47 L67.5 233.33 L68.5 233.19 L69.5 233.05 L70.5 232.91 L71.5 232.77 L72.5 232.63 L73.5 232.49 L74.5 232.35 L75.5 232.21 L76.5 232.07 L77.5 231.94 L78.5 231.80 L79.5 231.66 L80.5 231.53 L81.5 231.39 L82.5 231.26 L83.5 231.13 L84.5 230.99 L85.5 230.86 L86.5 230.73 L87.5 230.60 L88.5 230.46 L89.5 230.33 L90.5 230.20 L91.5 230.07 L92.5 229.94 L93.5 229.81 L94.5 229.69 L95.5 229.56 L96.5 229.43 L97.5 229.30 L98.5 229.18 L99.5 229.05 L100.5 228.92 L101.5 228.80 L102.5 228.67 L103.5 228.55 L104.5 228.42 L105.5 228.30 L106.5 228.18 L107.5 228.05 L108.5 227.93 L109.5 227.81 L110.5 227.69 L111.5 227.56 L112.5 227.44 L113.5 227.32 L114.5 227.20 L115.5 227.08 L116.5 226.96 L117.5 226.84 L118.5 226.72 L119.5 226.61 L120.5 226.49 L121.5 226.37 L122.5 226.25 L123.5 226.13 L124.5 226.02 L125.5 225.90 L126.5 225.78 L127.5 225.67 L128.5 225.55 L129.5 225.44 L130.5 225.32 L131.5 225.21 L132.5 225.09 L133.5 224.98 L134.5 224.87 L135.5 224.75 L136.5 224.64 L137.5 224.53 L138.5 224.42 L139.5 224.30 L140.5 224.19 L141.5 224.08 L142.5 223.97 L143.5 223.86 L144.5 223.75 L145.5 223.64 L146.5 223.53 L147.5 223.42 L148.5 223.31 L149.5 223.20 L150.5 223.09 L151.5 222.98 L152.5 222.87 L153.5 222.76 L154.5 222.66 L155.5 222.55 L156.5 222.44 L157.5 222.33 L158.5 222.23 L159.5 222.12 L160.5 222.01 L161.5 221.91 L162.5 221.80 L163.5 221.70 L164.5 221.59 L165.5 221.49 L166.5 221.38 L167.5 221.28 L168.5 221.17 L169.5 221.07 L170.5 220.96 L171.5 220.86 L172.5 220.76 L173.5 220.65 L174.5 220.55 L175.5 220.45 L176.5 220.35 L177.5 220.24 L178.5 220.14 L179.5 220.04 L180.5 219.94 L181.5 219.84 L182.5 219.73 L183.5 219.63 L184.5 219.53 L185.5 219.43 L186.5 219.33 L187.5 219.23 L188.5 219.13 L189.5 219.03 L190.5 218.93 L191.5 218.83 L192.5 218.73 L193.5 218.64 L194.5 218.54 L195.5 218.44 L196.5 218.34 L197.5 218.24 L198.5 218.15 L199.5 218.05 L200.5 217.95 L201.5 217.85 L202.5 217.76 L203.5 217.66 L204.5 217.56 L205.5 217.47 L206.5 217.37 L207.5 217.27 L208.5 217.18 L209.5 217.08 L210.5 216.99 L211.5 216.89 L212.5 216.80 L213.5 216.70 L214.5 216.61 L215.5 216.51 L216.5 216.42 L217.5 216.32 L218.5 216.23 L219.5 216.13 L220.5 216.04 L221.5 215.95 L222.5 215.85 L223.5 215.76 L224.5 215.67 L225.5 215.57 L226.5 215.48 L227.5 215.39 L228.5 215.30 L229.5 215.20 L230.5 215.11 L231.5 215.02 L232.5 214.93 L233.5 214.84 L234.5 214.75 L235.5 214.66 L236.5 214.56 L237.5 214.47 L238.5 214.38 L239.5 214.29 L240.5 214.20 L241.5 214.11 L242.5 214.02 L243.5 213.93 L244.5 213.84 L245.5 213.75 L246.5 213.66 L247.5 213.57 L248.5 213.48 L249.5 213.39 L250.5 213.31 L251.5 213.22 L252.5 213.13 L253.5 213.04 L254.5 212.95 L255.5 212.86 L256.5 212.78 L257.5 212.69 L258.5 212.60 L259.5 212.51 L260.5 212.42 L261.5 212.34 L262.5 212.25 L263.5 212.16 L264.5 212.08 L265.5 211.99 L266.5 211.90 L267.5 211.82 L268.5 211.73 L269.5 211.64 L270.5 211.56 L271.5 211.47 L272.5 211.39 L273.5 211.30 L274.5 211.21 L275.5 211.13 L276.5 211.04 L277.5 210.96 L278.5 210.87 L279.5 210.79 L280.5 210.70 L281.5 210.62 L282.5 210.53 L283.5 210.45 L284.5 210.37 L285.5 210.28 L286.5 210.20 L287.5 210.11 L288.5 210.03 L289.5 209.95 L290.5 209.86 L291.5 209.78 L292.5 209.70 L293.5 209.61 L294.5 209.53 L295.5 209.45 L296.5 209.37 L297.5 209.28 L298.5 209.20 L299.5 209.12 L300.5 209.04 L301.5 208.95 L302.5 208.87 L303.5 208.79 L304.5 208.71 L305.5 208.63 L306.5 208.54 L307.5 208.46 L308.5 208.38 L309.5 208.30 L310.5 208.22 L311.5 208.14 L312.5 208.06 L313.5 207.98 L314.5 207.90 L315.5 207.81 L316.5 207.73 L317.5 207.65 L318.5 207.57 L319.5 207.49 L320.5 207.41 L321.5 207.33 L322.5 207.25 L323.5 207.17 L324.5 207.09 L325.5 207.01 L326.5 206.94 L327.5 206.86 L328.5 206.78 L329.5 206.70 L330.5 206.62 L331.5 206.54 L332.5 206.46 L333.5 206.38 L334.5 206.30 L335.5 206.23 L336.5 206.15 L337.5 206.07 L338.5 205.99 L339.5 205.91 L340.5 205.83 L341.5 205.76 L342.5 205.68 L343.5 205.60 L344.5 205.52 L345.5 205.45 L346.5 205.37 L347.5 205.29 L348.5 205.21 L349.5 205.14 L350.5 205.06 L351.5 204.98 L352.5 204.91 L353.5 204.83 L354.5 204.75 L355.5 204.68 L356.5 204.60 L357.5 204.52 L358.5 204.45 L359.5 204.37 L360.5 204.30 L361.5 204.22 L362.5 204.14 L363.5 204.07 L364.5 203.99 L365.5 203.92 L366.5 203.84 L367.5 203.77 L368.5 203.69 L369.5 203.62 L370.5 203.54 L371.5 203.47 L372.5 203.39 L373.5 203.32 L374.5 203.24 L375.5 203.17 L376.5 203.09 L377.5 203.02 L378.5 202.94 L379.5 202.87 L380.5 202.80 L381.5 202.72 L382.5 202.65 L383.5 202.57 L384.5 202.50 L385.5 202.43 L386.5 202.35 L387.5 202.28 L388.5 202.20 L389.5 202.13 L390.5 202.06 L391.5 201.98 L392.5 201.91 L393.5 201.84 L394.5 201.77 L395.5 201.69 L396.5 201.62 L397.5 201.55 L398.5 201.47 L399.5 201.40 L400.5 201.33 L401.5 201.26 L402.5 201.18 L403.5 201.11 L404.5 201.04 L405.5 200.97 L406.5 200.89 L407.5 200.82 L408.5 200.75 L409.5 200.68 L410.5 200.61 L411.5 200.54 L412.5 200.46 L413.5 200.39 L414.5 200.32 L415.5 200.25 L416.5 200.18 L417.5 200.11 L418.5 200.04 L419.5 199.97 L420.5 199.89 L421.5 199.82 L422.5 199.75 L423.5 199.68 L424.5 199.61 L425.5 199.54 L426.5 199.47 L427.5 199.40 L428.5 199.33 L429.5 199.26 L430.5 199.19 L431.5 199.12 L432.5 199.05 L433.5 198.98 L434.5 198.91 L435.5 198.84 L436.5 198.77 L437.5 198.70 L438.5 198.63 L439.5 198.56 L440.5 198.49 L441.5 198.42 L442.5 198.35 L443.5 198.28 L444.5 198.21 L445.5 198.14 L446.5 198.07 L447.5 198.01 L448.5 197.94 L449.5 197.87 L450.5 197.80 L451.5 197.73 L452.5 197.66" fill="none" stroke="#00c800" stroke-width="1.5"/><path d="M48 236h1v11h-1zM55 234h1v6h-1zM83 229h1v5h-1zM108 224h1v6h-1zM154 219h1v5h-1zM183 217h1v5h-1zM235 211h1v6h-1zM246 209h1v8h-1zM261 210h1v4h-1zM297 205h1v9h-1zM303 204h1v8h-1zM326 201h1v10h-1zM343 200h1v9h-1zM377 198h1v10h-1zM381 201h1v6h-1zM382 198h1v5h-1zM386 201h1v6h-1zM387 197h1v6h-1zM394 200h1v5h-1zM395 197h1v5h-1zM404 196h1v10h-1zM426 194h1v10h-1zM431 196h1v6h-1zM280 208h1v4h-1zM214 214h1v4h-1zM128 223h1v4h-1z" fill="#00c800" shape-rendering="crispEdges"/><rect x="46" y="293" width="422" height="137" fill="#000"/><rect x="48" y="295" width="418" height="134" fill="url(#bg)"/><rect x="57" y="295" width="1" height="134" fill="#00009c"/><rect x="66" y="295" width="1" height="134" fill="#00009c"/><rect x="75" y="295" width="1" height="134" fill="#00009c"/><rect x="85" y="295" width="1" height="134" fill="#00009c"/><rect x="94" y="295" width="1" height="134" fill="#0000ff"/><rect x="103" y="295" width="1" height="134" fill="#00009c"/><rect x="113" y="295" width="1" height="134" fill="#00009c"/><rect x="122" y="295" width="1" height="134" fill="#00009c"/><rect x="131" y="295" width="1" height="134" fill="#00009c"/><rect x="140" y="295" width="1" height="134" fill="#0000ff"/><rect x="150" y="295" width="1" height="134" fill="#00009c"/><rect x="159" y="295" width="1" height="134" fill="#00009c"/><rect x="168" y="295" width="1" height="134" fill="#00009c"/><rect x="178" y="295" width="1" height="134" fill="#00009c"/><rect x="187" y="295" width="1" height="134" fill="#0000ff"/><rect x="196" y="295" width="1" height="134" fill="#00009c"/><rect x="205" y="295" width="1" height="134" fill="#00009c"/><rect x="215" y="295" width="1" height="134" fill="#00009c"/><rect x="224" y="295" width="1" height="134" fill="#00009c"/><rect x="233" y="295" width="1" height="134" fill="#0000ff"/><rect x="243" y="295" width="1" height="134" fill="#00009c"/><rect x="252" y="295" width="1" height="134" fill="#00009c"/><rect x="261" y="295" width="1" height="134" fill="#00009c"/><rect x="270" y="295" width="1" height="134" fill="#00009c"/><rect x="280" y="295" width="1" height="134" fill="#0000ff"/><rect x="289" y="295" width="1" height="134" fill="#00009c"/><rect x="298" y="295" width="1" height="134" fill="#00009c"/><rect x="308" y="295" width="1" height="134" fill="#00009c"/><rect x="317" y="295" width="1" height="134" fill="#00009c"/><rect x="326" y="295" width="1" height="134" fill="#0000ff"/><rect x="335" y="295" width="1" height="134" fill="#00009c"/><rect x="345" y="295" width="1" height="134" fill="#00009c"/><rect x="354" y="295" width="1" height="134" fill="#00009c"/><rect x="363" y="295" width="1" height="134" fill="#00009c"/><rect x="373" y="295" width="1" height="134" fill="#0000ff"/><rect x="382" y="295" width="1" height="134" fill="#00009c"/><rect x="391" y="295" width="1" height="134" fill="#00009c"/><rect x="400" y="295" width="1" height="134" fill="#00009c"/><rect x="410" y="295" width="1" height="134" fill="#00009c"/><rect x="419" y="295" width="1" height="134" fill="#0000ff"/><rect x="428" y="295" width="1" height="134" fill="#00009c"/><rect x="438" y="295" width="1" height="134" fill="#00009c"/><rect x="447" y="295" width="1" height="134" fill="#00009c"/><rect x="456" y="295" width="1" height="134" fill="#00009c"/><rect x="46" y="295" width="420" height="1" fill="#0000ff"/><rect x="46" y="309" width="420" height="1" fill="#00009c"/><rect x="46" y="322" width="420" height="1" fill="#0000ff"/><rect x="46" y="335" width="420" height="1" fill="#00009c"/><rect x="46" y="349" width="420" height="1" fill="#0000ff"/><rect x="46" y="362" width="420" height="1" fill="#00009c"/><rect x="46" y="375" width="420" height="1" fill="#0000ff"/><rect x="46" y="389" width="420" height="1" fill="#00009c"/><rect x="46" y="402" width="420" height="1" fill="#0000ff"/><rect x="46" y="415" width="420" height="1" fill="#00009c"/><rect x="46" y="428" width="420" height="1" fill="#0000ff"/><rect x="452" y="295" width="1" height="133" fill="#d8d8d8"/><rect x="49" y="349" width="1" height="79" fill="#44ff00" shape-rendering="crispEdges"/><rect x="54" y="362" width="1" height="66" fill="#44ff00" shape-rendering="crispEdges"/><rect x="79" y="402" width="1" height="26" fill="#44ff00" shape-rendering="crispEdges"/><rect x="90" y="415" width="1" height="13" fill="#44ff00" shape-rendering="crispEdges"/><rect x="99" y="415" width="1" height="13" fill="#44ff00" shape-rendering="crispEdges"/><rect x="114" y="375" width="1" height="53" fill="#44ff00" shape-rendering="crispEdges"/><rect x="122" y="402" width="1" height="26" fill="#44ff00" shape-rendering="crispEdges"/><rect x="135" y="402" width="1" height="26" fill="#44ff00" shape-rendering="crispEdges"/><rect x="144" y="402" width="1" height="26" fill="#44ff00" shape-rendering="crispEdges"/><rect x="151" y="389" width="1" height="39" fill="#44ff00" shape-rendering="crispEdges"/><rect x="162" y="415" width="3" height="13" fill="#44ff00" shape-rendering="crispEdges"/><rect x="163" y="402" width="1" height="26" fill="#44ff00" shape-rendering="crispEdges"/><rect x="166" y="415" width="3" height="13" fill="#44ff00" shape-rendering="crispEdges"/><rect x="167" y="389" width="1" height="39" fill="#44ff00" shape-rendering="crispEdges"/><rect x="170" y="415" width="4" height="13" fill="#44ff00" shape-rendering="crispEdges"/><rect x="170" y="402" width="1" height="26" fill="#44ff00" shape-rendering="crispEdges"/><rect x="172" y="402" width="1" height="26" fill="#44ff00" shape-rendering="crispEdges"/><rect x="177" y="389" width="1" height="39" fill="#44ff00" shape-rendering="crispEdges"/><rect x="190" y="415" width="2" height="13" fill="#44ff00" shape-rendering="crispEdges"/><rect x="191" y="389" width="1" height="39" fill="#44ff00" shape-rendering="crispEdges"/><rect x="197" y="389" width="1" height="39" fill="#44ff00" shape-rendering="crispEdges"/><rect x="207" y="415" width="2" height="13" fill="#44ff00" shape-rendering="crispEdges"/><rect x="207" y="389" width="1" height="39" fill="#44ff00" shape-rendering="crispEdges"/><rect x="212" y="389" width="1" height="39" fill="#44ff00" shape-rendering="crispEdges"/><rect x="225" y="415" width="1" height="13" fill="#44ff00" shape-rendering="crispEdges"/><rect x="230" y="415" width="1" height="13" fill="#44ff00" shape-rendering="crispEdges"/><rect x="235" y="415" width="1" height="13" fill="#44ff00" shape-rendering="crispEdges"/><rect x="238" y="415" width="1" height="13" fill="#44ff00" shape-rendering="crispEdges"/><rect x="240" y="362" width="4" height="66" fill="#44ff00" shape-rendering="crispEdges"/><rect x="241" y="335" width="2" height="93" fill="#44ff00" shape-rendering="crispEdges"/><rect x="251" y="402" width="1" height="26" fill="#44ff00" shape-rendering="crispEdges"/><rect x="253" y="415" width="1" height="13" fill="#44ff00" shape-rendering="crispEdges"/><rect x="258" y="415" width="2" height="13" fill="#44ff00" shape-rendering="crispEdges"/><rect x="263" y="415" width="6" height="13" fill="#44ff00" shape-rendering="crispEdges"/><rect x="265" y="402" width="3" height="26" fill="#44ff00" shape-rendering="crispEdges"/><rect x="280" y="415" width="8" height="13" fill="#44ff00" shape-rendering="crispEdges"/><rect x="286" y="402" width="1" height="26" fill="#44ff00" shape-rendering="crispEdges"/><rect x="295" y="389" width="1" height="39" fill="#44ff00" shape-rendering="crispEdges"/><rect x="298" y="389" width="1" height="39" fill="#44ff00" shape-rendering="crispEdges"/><rect x="297" y="415" width="22" height="13" fill="#44ff00" shape-rendering="crispEdges"/><rect x="300" y="402" width="1" height="26" fill="#44ff00" shape-rendering="crispEdges"/><rect x="303" y="402" width="1" height="26" fill="#44ff00" shape-rendering="crispEdges"/><rect x="305" y="402" width="1" height="26" fill="#44ff00" shape-rendering="crispEdges"/><rect x="322" y="415" width="3" height="13" fill="#44ff00" shape-rendering="crispEdges"/><rect x="323" y="349" width="1" height="79" fill="#44ff00" shape-rendering="crispEdges"/><rect x="326" y="389" width="1" height="39" fill="#44ff00" shape-rendering="crispEdges"/><rect x="328" y="402" width="1" height="26" fill="#44ff00" shape-rendering="crispEdges"/><rect x="342" y="415" width="1" height="13" fill="#44ff00" shape-rendering="crispEdges"/><rect x="350" y="389" width="1" height="39" fill="#44ff00" shape-rendering="crispEdges"/><rect x="360" y="415" width="1" height="13" fill="#44ff00" shape-rendering="crispEdges"/><rect x="370" y="402" width="1" height="26" fill="#44ff00" shape-rendering="crispEdges"/><rect x="390" y="415" width="1" height="13" fill="#44ff00" shape-rendering="crispEdges"/><rect x="394" y="415" width="1" height="13" fill="#44ff00" shape-rendering="crispEdges"/><rect x="401" y="402" width="3" height="26" fill="#44ff00" shape-rendering="crispEdges"/><rect x="402" y="389" width="1" height="39" fill="#44ff00" shape-rendering="crispEdges"/><rect x="407" y="402" width="2" height="26" fill="#44ff00" shape-rendering="crispEdges"/><rect x="414" y="415" width="2" height="13" fill="#44ff00" shape-rendering="crispEdges"/><rect x="425" y="415" width="4" height="13" fill="#44ff00" shape-rendering="crispEdges"/><rect x="426" y="375" width="1" height="53" fill="#44ff00" shape-rendering="crispEdges"/><rect x="441" y="415" width="1" height="13" fill="#44ff00" shape-rendering="crispEdges"/><path d="M48.5 301.7 L49.5 304.6 L50.5 305.4 L51.5 308.1 L52.5 308.7 L53.5 309.6 L54.5 311.9 L55.5 312.4 L56.5 317.2 L57.5 311.6 L58.5 312.9 L59.5 313.7 L60.5 314.6 L61.5 315.5 L62.5 310.7 L63.5 316.1 L64.5 311.7 L65.5 314.9 L66.5 321.9 L67.5 315.0 L68.5 314.6 L69.5 317.7 L70.5 315.7 L71.5 313.5 L72.5 322.4 L73.5 314.8 L74.5 318.0 L75.5 314.9 L76.5 318.9 L77.5 317.7 L78.5 318.1 L79.5 317.6 L80.5 318.7 L81.5 318.7 L82.5 317.4 L83.5 315.9 L84.5 318.5 L85.5 320.5 L86.5 319.1 L87.5 319.1 L88.5 321.5 L89.5 317.2 L90.5 318.5 L91.5 320.0 L92.5 323.1 L93.5 321.7 L94.5 318.2 L95.5 314.8 L96.5 320.3 L97.5 319.4 L98.5 316.3 L99.5 319.6 L100.5 314.2 L101.5 316.0 L102.5 321.2 L103.5 315.8 L104.5 317.6 L105.5 312.9 L106.5 320.0 L107.5 314.6 L108.5 323.1 L109.5 319.2 L110.5 317.7 L111.5 321.8 L112.5 320.4 L113.5 320.8 L114.5 314.0 L115.5 316.3 L116.5 319.9 L117.5 317.1 L118.5 317.1 L119.5 318.0 L120.5 316.8 L121.5 317.3 L122.5 320.8 L123.5 317.4 L124.5 318.4 L125.5 318.2 L126.5 315.0 L127.5 312.6 L128.5 314.3 L129.5 318.1 L130.5 320.1 L131.5 318.9 L132.5 317.4 L133.5 314.4 L134.5 315.8 L135.5 320.2 L136.5 314.4 L137.5 319.5 L138.5 316.2 L139.5 316.2 L140.5 320.3 L141.5 319.1 L142.5 317.3 L143.5 315.6 L144.5 311.3 L145.5 319.1 L146.5 320.4 L147.5 318.1 L148.5 316.8 L149.5 315.2 L150.5 317.6 L151.5 317.9 L152.5 317.9 L153.5 318.8 L154.5 313.4 L155.5 319.1 L156.5 318.2 L157.5 319.6 L158.5 319.0 L159.5 316.1 L160.5 319.1 L161.5 319.3 L162.5 316.2 L163.5 312.5 L164.5 315.9 L165.5 318.0 L166.5 315.7 L167.5 315.7 L168.5 321.3 L169.5 317.0 L170.5 317.8 L171.5 317.0 L172.5 315.1 L173.5 320.9 L174.5 316.9 L175.5 317.5 L176.5 317.8 L177.5 317.9 L178.5 315.3 L179.5 315.1 L180.5 316.8 L181.5 316.1 L182.5 319.7 L183.5 317.5 L184.5 317.0 L185.5 319.2 L186.5 314.6 L187.5 315.0 L188.5 318.0 L189.5 316.8 L190.5 318.9 L191.5 318.9 L192.5 315.3 L193.5 319.2 L194.5 319.4 L195.5 316.4 L196.5 316.5 L197.5 313.4 L198.5 318.2 L199.5 321.6 L200.5 313.6 L201.5 316.3 L202.5 319.2 L203.5 315.6 L204.5 313.7 L205.5 315.2 L206.5 317.3 L207.5 316.3 L208.5 315.1 L209.5 320.2 L210.5 313.6 L211.5 316.6 L212.5 319.2 L213.5 315.5 L214.5 317.3 L215.5 319.4 L216.5 315.2 L217.5 314.8 L218.5 316.0 L219.5 318.6 L220.5 317.8 L221.5 320.6 L222.5 315.4 L223.5 316.0 L224.5 316.2 L225.5 316.3 L226.5 313.5 L227.5 318.7 L228.5 316.2 L229.5 315.8 L230.5 321.0 L231.5 315.2 L232.5 318.0 L233.5 318.0 L234.5 314.5 L235.5 316.6 L236.5 317.3 L237.5 315.4 L238.5 316.8 L239.5 317.7 L240.5 313.2 L241.5 318.5 L242.5 318.0 L243.5 317.9 L244.5 313.9 L245.5 315.7 L246.5 314.8 L247.5 315.8 L248.5 314.4 L249.5 314.0 L250.5 316.9 L251.5 314.7 L252.5 317.4 L253.5 314.8 L254.5 317.4 L255.5 323.2 L256.5 316.0 L257.5 321.5 L258.5 316.9 L259.5 313.8 L260.5 311.3 L261.5 317.5 L262.5 313.8 L263.5 308.5 L264.5 312.1 L265.5 315.5 L266.5 316.1 L267.5 316.8 L268.5 313.1 L269.5 314.7 L270.5 316.0 L271.5 316.8 L272.5 316.9 L273.5 315.0 L274.5 311.9 L275.5 316.2 L276.5 313.1 L277.5 314.9 L278.5 314.1 L279.5 311.4 L280.5 315.1 L281.5 313.1 L282.5 314.8 L283.5 315.1 L284.5 314.0 L285.5 311.1 L286.5 313.1 L287.5 313.6 L288.5 314.8 L289.5 319.6 L290.5 315.8 L291.5 313.0 L292.5 313.7 L293.5 311.5 L294.5 314.7 L295.5 314.1 L296.5 316.8 L297.5 314.9 L298.5 315.4 L299.5 319.8 L300.5 313.3 L301.5 312.4 L302.5 317.7 L303.5 314.7 L304.5 315.1 L305.5 314.6 L306.5 314.4 L307.5 316.7 L308.5 313.9 L309.5 315.2 L310.5 312.1 L311.5 313.7 L312.5 317.4 L313.5 314.3 L314.5 309.5 L315.5 312.3 L316.5 315.6 L317.5 316.3 L318.5 313.7 L319.5 313.8 L320.5 311.5 L321.5 313.7 L322.5 312.7 L323.5 311.9 L324.5 314.0 L325.5 314.7 L326.5 316.0 L327.5 317.0 L328.5 314.0 L329.5 313.4 L330.5 318.1 L331.5 315.9 L332.5 315.3 L333.5 313.4 L334.5 313.2 L335.5 311.1 L336.5 312.5 L337.5 312.6 L338.5 313.3 L339.5 313.7 L340.5 310.0 L341.5 313.9 L342.5 310.8 L343.5 311.5 L344.5 317.7 L345.5 312.3 L346.5 315.6 L347.5 315.1 L348.5 311.0 L349.5 313.2 L350.5 309.4 L351.5 310.1 L352.5 311.7 L353.5 317.4 L354.5 312.1 L355.5 311.5 L356.5 310.5 L357.5 309.9 L358.5 313.7 L359.5 312.5 L360.5 309.1 L361.5 312.4 L362.5 310.3 L363.5 303.6 L364.5 311.4 L365.5 307.5 L366.5 308.7 L367.5 310.8 L368.5 306.3 L369.5 304.6 L370.5 309.6 L371.5 304.9 L372.5 315.4 L373.5 313.5 L374.5 307.0 L375.5 308.2 L376.5 309.2 L377.5 308.1 L378.5 310.4 L379.5 309.6 L380.5 308.4 L381.5 309.6 L382.5 307.7 L383.5 309.1 L384.5 312.5 L385.5 305.6 L386.5 308.6 L387.5 306.2 L388.5 311.8 L389.5 305.9 L390.5 306.2 L391.5 308.9 L392.5 308.2 L393.5 309.8 L394.5 308.5 L395.5 304.7 L396.5 309.1 L397.5 305.8 L398.5 304.4 L399.5 306.2 L400.5 307.2 L401.5 306.2 L402.5 307.7 L403.5 307.3 L404.5 309.5 L405.5 308.4 L406.5 305.9 L407.5 305.6 L408.5 303.3 L409.5 306.4 L410.5 309.9 L411.5 306.2 L412.5 306.2 L413.5 303.6 L414.5 308.2 L415.5 304.0 L416.5 309.0 L417.5 303.0 L418.5 303.5 L419.5 306.2 L420.5 305.7 L421.5 307.3 L422.5 305.8 L423.5 307.6 L424.5 304.2 L425.5 312.0 L426.5 308.9 L427.5 308.6 L428.5 308.8 L429.5 307.5 L430.5 307.6 L431.5 306.8 L432.5 306.9 L433.5 309.9 L434.5 307.2 L435.5 308.1 L436.5 305.5 L437.5 309.0 L438.5 306.2 L439.5 310.9 L440.5 301.5 L441.5 305.4 L442.5 312.3 L443.5 309.5 L444.5 305.9 L445.5 308.4 L446.5 307.8 L447.5 308.4 L448.5 307.6 L449.5 313.4 L450.5 311.8 L451.5 312.6 L452.5 313.8" fill="none" stroke="#ff00ff" stroke-width="1.6" stroke-linejoin="miter" stroke-miterlimit="6"/></svg>
<span id="t65" class="t" style="color:#000;top:126px;right:599px;">20</span>
<span id="t66" class="t" style="color:#000;top:153px;right:599px;">16</span>
<span id="t67" class="t" style="color:#000;top:180px;right:599px;">12</span>
<span id="t68" class="t" style="color:#000;top:206px;right:599px;">8</span>
<span id="t69" class="t" style="color:#000;top:233px;right:599px;">4</span>
<span id="t70" class="t" style="color:#000;top:126px;left:471px;">16</span>
<span id="t71" class="t" style="color:#000;top:142px;left:471px;">14</span>
<span id="t72" class="t" style="color:#000;top:159px;left:471px;">12</span>
<span id="t73" class="t" style="color:#000;top:176px;left:471px;">10</span>
<span id="t74" class="t" style="color:#000;top:193px;left:471px;">8</span>
<span id="t75" class="t" style="color:#000;top:209px;left:471px;">6</span>
<span id="t76" class="t" style="color:#000;top:226px;left:471px;">4</span>
<span id="t77" class="t" style="color:#000;top:243px;left:471px;">2</span>
<span id="t78" class="t" style="color:#000;top:288px;right:599px;">10</span>
<span id="t79" class="t" style="color:#000;top:288px;left:471px;">10</span>
<span id="t80" class="t" style="color:#000;top:314px;right:599px;">8</span>
<span id="t81" class="t" style="color:#000;top:314px;left:471px;">8</span>
<span id="t82" class="t" style="color:#000;top:341px;right:599px;">6</span>
<span id="t83" class="t" style="color:#000;top:341px;left:471px;">6</span>
<span id="t84" class="t" style="color:#000;top:368px;right:599px;">4</span>
<span id="t85" class="t" style="color:#000;top:368px;left:471px;">4</span>
<span id="t86" class="t" style="color:#000;top:395px;right:599px;">2</span>
<span id="t87" class="t" style="color:#000;top:395px;left:471px;">2</span>
<span id="t88" class="t" style="color:#000;top:270px;left:42.0px;letter-spacing:0.168px;">0.0</span>
<span id="t89" class="t" style="color:#000;top:432px;left:42.0px;letter-spacing:0.168px;">0.0</span>
<span id="t90" class="t" style="color:#000;top:270px;left:88.44444444444444px;letter-spacing:0.168px;">0.5</span>
<span id="t91" class="t" style="color:#000;top:432px;left:88.44444444444444px;letter-spacing:0.168px;">0.5</span>
<span id="t92" class="t" style="color:#000;top:270px;left:134.88888888888889px;letter-spacing:0.168px;">1.0</span>
<span id="t93" class="t" style="color:#000;top:432px;left:134.88888888888889px;letter-spacing:0.168px;">1.0</span>
<span id="t94" class="t" style="color:#000;top:270px;left:181.33333333333334px;letter-spacing:0.168px;">1.5</span>
<span id="t95" class="t" style="color:#000;top:432px;left:181.33333333333334px;letter-spacing:0.168px;">1.5</span>
<span id="t96" class="t" style="color:#000;top:270px;left:227.77777777777777px;letter-spacing:0.168px;">2.0</span>
<span id="t97" class="t" style="color:#000;top:432px;left:227.77777777777777px;letter-spacing:0.168px;">2.0</span>
<span id="t98" class="t" style="color:#000;top:270px;left:274.22222222222223px;letter-spacing:0.168px;">2.5</span>
<span id="t99" class="t" style="color:#000;top:432px;left:274.22222222222223px;letter-spacing:0.168px;">2.5</span>
<span id="t100" class="t" style="color:#000;top:270px;left:320.6666666666667px;letter-spacing:0.168px;">3.0</span>
<span id="t101" class="t" style="color:#000;top:432px;left:320.6666666666667px;letter-spacing:0.168px;">3.0</span>
<span id="t102" class="t" style="color:#000;top:270px;left:367.1111111111111px;letter-spacing:0.168px;">3.5</span>
<span id="t103" class="t" style="color:#000;top:432px;left:367.1111111111111px;letter-spacing:0.168px;">3.5</span>
<span id="t104" class="t" style="color:#000;top:270px;left:413.55555555555554px;letter-spacing:0.168px;">4.0</span>
<span id="t105" class="t" style="color:#000;top:432px;left:413.55555555555554px;letter-spacing:0.168px;">4.0</span>
<span id="t106" class="t" style="color:#000;top:270px;left:460.0px;letter-spacing:0.168px;">4.5</span>
<span id="t107" class="t" style="color:#000;top:432px;left:460.0px;letter-spacing:0.168px;">4.5</span>
</div></body></html>
